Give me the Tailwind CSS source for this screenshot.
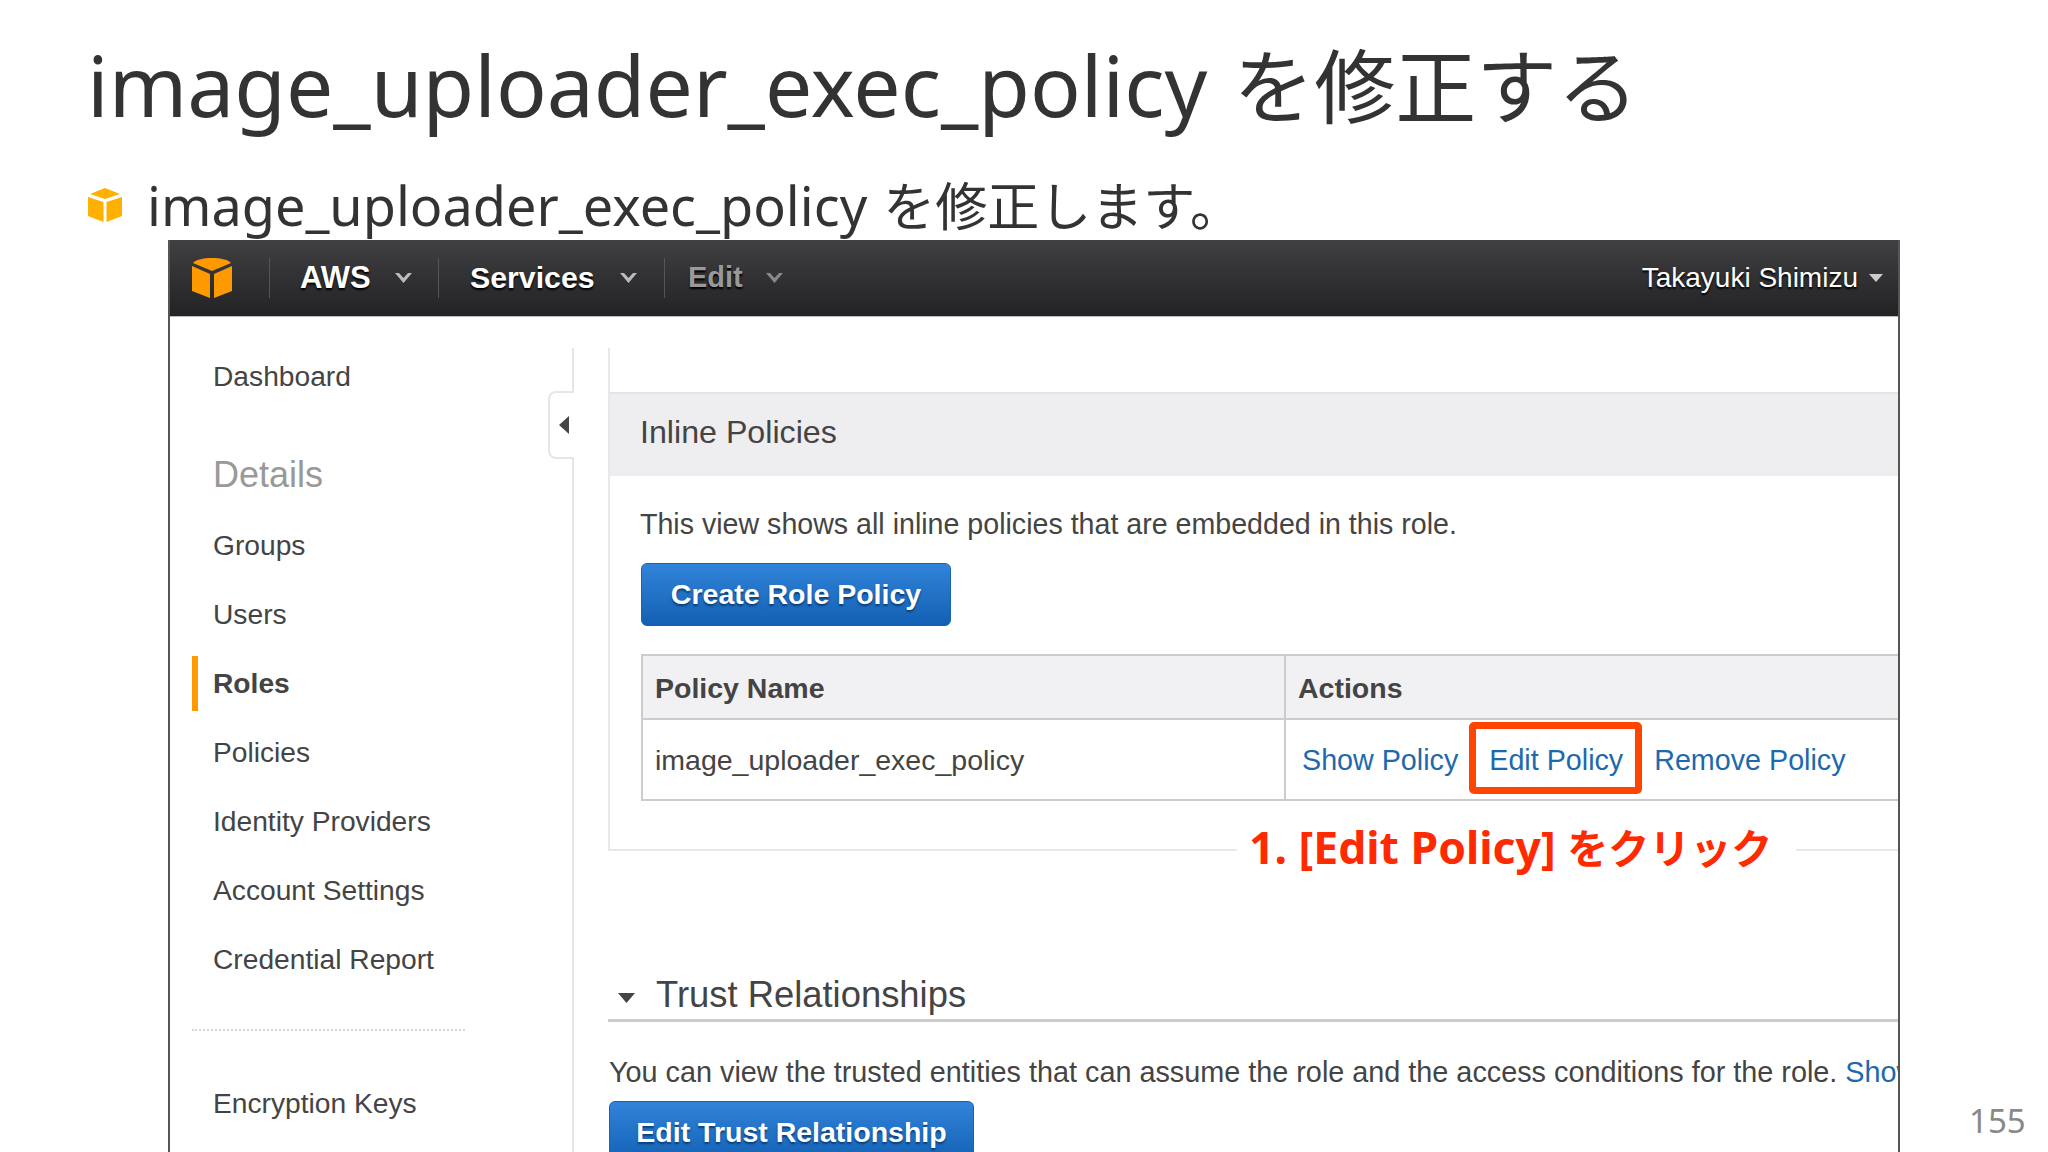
<!DOCTYPE html>
<html lang="ja">
<head>
    <meta charset="UTF-8">
    <title>image_uploader_exec_policy</title>
    <script src="https://cdn.jsdelivr.net/npm/@tailwindcss/browser@4"></script>
</head>
<body class="bg-white w-[2048px] h-[1152px] overflow-hidden relative font-['Liberation_Sans',sans-serif]">
    <!-- slide heading -->
    <h1 class="pl-[87px] pt-[27px] h-[170px] text-[84px] leading-[116px] text-[#333] font-['Noto_Sans','Noto_Sans_CJK_JP',sans-serif]">image_uploader_exec_policy <span class="ml-[4px] text-[81px]">を修正する</span></h1>
    <div class="flex items-center pl-[88px] h-[70px] gap-[25px]">
        <svg class="w-[34px] h-[34px]" viewBox="0 0 34 34"><path fill="#ffb000" d="M17 0 32 6 17 11 2 6ZM0 9 15.500 14V34L0 28ZM34 9 18.500 14V34L34 28Z"/></svg>
        <p class="text-[54px] leading-[70px] text-[#333] font-['Noto_Sans','Noto_Sans_CJK_JP',sans-serif]">image_uploader_exec_policy <span class="ml-[2px] text-[52px]">を修正します。</span></p>
    </div>

    <!-- console screenshot -->
    <div class="ml-[168px] w-[1732px] h-[912px] overflow-hidden border-x-2 border-[#555] text-[#444] text-[28.2px]">
        <header class="h-[77px] -mx-[2px] bg-linear-to-b from-[#403f42] to-[#232325] border-b border-[#bbb] flex items-center text-white font-bold [text-shadow:0_2px_2px_#000]">
            <svg class="ml-[23px] w-[42px] h-[42px]" viewBox="0 0 42 42"><path fill="#ff9900" d="M21 1C30 1 38 3 40 6L21 14 2 6C4 3 12 1 21 1ZM1 9 19 17V41L1 34ZM41 9 23 17V41L41 34Z"/></svg>
            <div class="ml-[36px] h-[40px] border-l border-[#555] pl-[30px] w-[169px] flex items-center"><span class="text-[31px]">AWS</span><svg class="ml-[24px] w-[17px] h-[10px]" viewBox="0 0 17 10"><path fill="#bbb" d="M0 0 4 0 8.500 5 13 0 17 0 8.500 10Z"/></svg></div>
            <div class="h-[40px] border-l border-[#555] pl-[31px] w-[226px] flex items-center"><span class="text-[30.300px]">Services</span><svg class="ml-[25px] w-[17px] h-[10px]" viewBox="0 0 17 10"><path fill="#bbb" d="M0 0 4 0 8.500 5 13 0 17 0 8.500 10Z"/></svg></div>
            <div class="h-[40px] border-l border-[#555] pl-[23px] flex items-center text-[#999]"><span class="text-[29px]">Edit</span><svg class="ml-[23px] w-[17px] h-[10px]" viewBox="0 0 17 10"><path fill="#888" d="M0 0 4 0 8.500 5 13 0 17 0 8.500 10Z"/></svg></div>
            <div class="ml-auto mr-[17px] flex items-center gap-[11px] font-normal text-[28px]"><span>Takayuki Shimizu</span><svg class="w-[14px] h-[8px]" viewBox="0 0 14 8"><path fill="#ccc" d="M0 0H14L7 8Z"/></svg></div>
        </header>

        <div class="flex pt-[31px] h-[835px]">
            <!-- left nav -->
            <nav class="relative w-[404px] shrink-0 border-r-2 border-[#e6e6ea] pl-[43px]">
                <div class="h-[56px] flex items-center">Dashboard</div>
                <div class="mt-[43px] h-[56px] flex items-center text-[36px] text-[#999]">Details</div>
                <div class="mt-[8px] h-[69px] flex items-center">Groups</div>
                <div class="h-[69px] flex items-center">Users</div>
                <div class="h-[69px] flex items-center font-bold relative">
                    <span class="absolute left-[-21px] top-[7px] w-[6px] h-[55px] bg-[#ff9900]"></span>Roles
                </div>
                <div class="h-[69px] flex items-center">Policies</div>
                <div class="h-[69px] flex items-center">Identity Providers</div>
                <div class="h-[69px] flex items-center">Account Settings</div>
                <div class="h-[69px] flex items-center">Credential Report</div>
                <div class="w-[273px] -ml-[21px] mt-[35px] border-t-2 border-dotted border-[#d5d5d5]"></div>
                <div class="mt-[38px] h-[69px] flex items-center">Encryption Keys</div>
                <button class="absolute right-[-2px] top-[43px] w-[26px] h-[68px] bg-white border-2 border-r-0 border-[#e6e6ea] rounded-l-[8px] flex items-center justify-center pl-[3px]">
                    <svg class="w-[10px] h-[18px]" viewBox="0 0 10 18"><path fill="#444" d="M10 0V18L0 9Z"/></svg>
                </button>
            </nav>

            <!-- main -->
            <main class="ml-[34px] flex-1 min-w-0">
                <section class="relative pt-[44px] border-l-2 border-b-2 border-[#e8e8ec] h-[503px]">
                    <div class="h-[84px] pl-[30px] pb-[6px] flex items-center bg-[#eeedf0] border-t-2 border-[#e4e4e8] text-[32.200px]">Inline Policies</div>
                    <p class="pl-[30px] h-[40px] mt-[28px] leading-[40px] text-[28.600px]">This view shows all inline policies that are embedded in this role.</p>
                    <div class="pl-[31px] mt-[19px]">
                        <button class="w-[310px] h-[63px] rounded-[6px] border border-[#1a62ae] bg-linear-to-b from-[#3184da] to-[#1160b3] text-white font-bold text-[28.500px] [text-shadow:0_2px_2px_#0b3d75]">Create Role Policy</button>
                    </div>
                    <div class="ml-[31px] mt-[28px] border-2 border-r-0 border-[#ccc] grid grid-cols-[643px_1fr] text-[28.500px]">
                        <div class="h-[64px] pl-[12px] pt-[2px] flex items-center font-bold bg-[#f1f1f3] border-r-2 border-b-2 border-[#ccc]">Policy Name</div>
                        <div class="h-[64px] pl-[12px] pt-[2px] flex items-center font-bold bg-[#f1f1f3] border-b-2 border-[#ccc]">Actions</div>
                        <div class="h-[79px] pl-[12px] pt-[2px] flex items-center border-r-2 border-[#ccc]">image_uploader_exec_policy</div>
                        <div class="h-[79px] pl-[16px] pt-[2px] flex items-center text-[#1d69ae] text-[28.700px] gap-[31px] relative">
                            <span>Show Policy</span><span>Edit Policy</span><span>Remove Policy</span>
                            <span class="absolute left-[183px] top-[2px] w-[173px] h-[72px] border-[7px] border-[#ff4500] rounded-[5px]"></span>
                        </div>
                    </div>
                    <!-- annotation sits on the section's bottom line -->
                    <div class="absolute left-[627px] top-[474px] h-[50px] pl-[12px] pr-[24px] bg-white text-[#ff2a00] font-bold text-[44.500px] leading-[50px] whitespace-nowrap font-['Noto_Sans','Noto_Sans_CJK_JP',sans-serif]">1. [Edit Policy] <span class="text-[41px]">をクリック</span></div>
                </section>

                <div class="mt-[125px] h-[46px] border-b-[3px] border-[#ccc] flex items-center pl-[10px] gap-[21px] text-[36.400px]">
                    <svg class="w-[17px] h-[10px]" viewBox="0 0 17 10"><path fill="#444" d="M0 0H17L8.500 10Z"/></svg>
                    <span class="-mt-[4px]">Trust Relationships</span>
                </div>
                <p class="mt-[30px] pl-[1px] h-[40px] leading-[40px] whitespace-nowrap text-[28.800px]">You can view the trusted entities that can assume the role and the access conditions for the role. <span class="text-[#1d69ae]">Show</span></p>
                <button class="mt-[9px] ml-[1px] w-[365px] h-[63px] rounded-[6px] border border-[#1a62ae] bg-linear-to-b from-[#3184da] to-[#1160b3] text-white font-bold text-[28.500px] [text-shadow:0_2px_2px_#0b3d75]">Edit Trust Relationship</button>
            </main>
        </div>
    </div>

    <!-- page number -->
    <div class="absolute left-[1969px] top-[1099px] text-[33px] leading-[44px] text-[#888] font-['Noto_Sans',sans-serif]">155</div>
</body>
</html>
